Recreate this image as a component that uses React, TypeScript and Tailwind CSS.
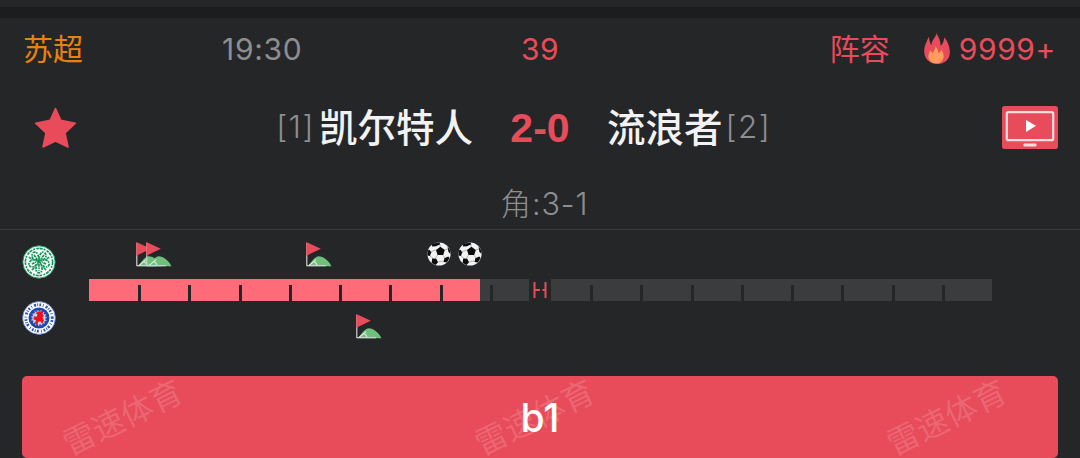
import React from 'react';

const TICKS = [0, 1, 2, 3, 4, 5, 6, 7];

const StarIcon: React.FC = () => (
  <svg className="w-[44px] h-[44px] -mt-px" viewBox="0 0 44 44">
    <path
      d="M21.5 2.5L26.8 14.4L41.3 17.2L31 27L34 41L21.5 35L9 41L12 27L1.7 17.2L16.2 14.4Z"
      fill="#e84c5b"
      stroke="#e84c5b"
      strokeWidth="1.6"
      strokeLinejoin="round"
    />
  </svg>
);

const FireIcon: React.FC = () => (
  <svg className="w-[26px] h-[31px]" viewBox="0 0 78 94">
    <path
      d="M38 0C41 12 50 18 50 39C57 34 60 25 61 13C70 24 78 40 78 58C78 80 61 94 39 94C16 94 0 78 0 54C0 38 8 26 14 11C16 20 17 30 22 37C23 21 35 14 38 0Z"
      fill="#e84c5b"
    />
    <path
      d="M35 40C38 46 43 50 43 61C48 59 51 56 53 51C57 59 60 65 59 73C57 86 48 92 37 92C24 92 13 84 13 71C13 64 17 60 18 53C22 55 24 58 26 62C29 54 34 50 35 40Z"
      fill="#ff9d5c"
    />
  </svg>
);

const LiveIcon: React.FC = () => (
  <svg className="w-[56px] h-[43px] -mt-[2px]" viewBox="0 0 56 43">
    <rect width="56" height="43" rx="2.8" fill="#e84c5b" />
    <rect x="4.8" y="6.2" width="46.4" height="28" rx="1.5" fill="none" stroke="#fbdcdf" strokeWidth="2.2" />
    <path d="M24 14L34 19.8L24 26Z" fill="#fff" />
    <rect x="21.5" y="37.5" width="13" height="3" rx="1" fill="#fbdcdf" />
  </svg>
);

const CornerIcon: React.FC<{ className?: string }> = ({ className }) => (
  <svg className={`w-[26px] h-[25px] shrink-0 ${className || ''}`} viewBox="0 0 26 25">
    <path d="M2 24.2C5 20.5 8 15 12.5 14.2C17.5 14.4 23 18.5 25.5 24.2Z" fill="#6fc07c" />
    <path d="M3 23.5L10 17.6M7.5 19.5C9.5 20 10.5 21.5 11 23" fill="none" stroke="#d9efdd" strokeWidth="1.1" />
    <path d="M0.8 1V24M0.5 23.6H20" fill="none" stroke="#d0d0d2" strokeWidth="1.2" />
    <path d="M0.3 0L14.8 6.8L0.3 13.8Z" fill="#e84c5b" />
  </svg>
);

const BallIcon: React.FC = () => (
  <svg className="w-[24px] h-[24px] shrink-0" viewBox="0 0 24 24">
    <circle cx="12" cy="12" r="11.6" fill="#f3f3f3" />
    <path
      d="M13 5V2M17.5 8L21 7M16 13.2L18 16M10.5 13L8 17M9 8L4 9.5M3 14L7 17M10.5 20L16.5 19"
      stroke="#9a9a9a"
      strokeWidth="0.7"
    />
    <g fill="#0c0c0d">
      <path d="M9 8L13.4 4.8L17.8 7.9L16.2 13H10.6Z" />
      <path d="M5.2 1.8L12.5 0.5L13.2 2.2L9 4.2L5 4.4Z" />
      <path d="M0.6 8.5L2.5 7.8L4.2 10.2L3 14L0.5 13.5Z" />
      <path d="M5.2 16.6L9.3 16.8L11 20.2L8.6 23L4.6 21Z" />
      <path d="M17.4 16.2L21.2 14.6L22.6 16L19.8 20.4L16.5 20Z" />
      <path d="M20.5 4.2L23.2 8.5L23.5 12L21.4 9.8Z" />
    </g>
  </svg>
);

const HomeCrest: React.FC = () => (
  <svg className="w-[34px] h-[34px]" viewBox="0 0 34 34">
    <circle cx="17" cy="17" r="16.2" fill="#f6fbf8" stroke="#12935a" strokeWidth="0.9" />
    <circle cx="17" cy="17" r="13.6" fill="none" stroke="#12935a" strokeWidth="1.6" strokeDasharray="3.2 1 1.8 1.4 2.6 0.7" />
    <g fill="none" stroke="#12935a" strokeWidth="1.7" strokeDasharray="2.8 0.7 1.6 1.1">
      <path d="M17 16C11 16 8 11 11.5 7.5C15 5.5 17 11 17 16C17 11 19 5.5 22.5 7.5C26 11 23 16 17 16" />
      <path d="M17 16C21 13 28 15 27 20C24 25 19 20 17 16C15 20 10 25 7 20C6 15 13 13 17 16" />
      <path d="M17 16C14 20 12 27 17 28C22 27 20 20 17 16" />
      <path d="M12 10L15 14M22 10L19 14M10 19L14 17M24 19L20 17M17 19V26M7 12L10 15M27 12L24 15M10 25L13 22M24 25L21 22" />
    </g>
  </svg>
);

const AwayCrest: React.FC = () => (
  <svg className="w-[34px] h-[34px]" viewBox="0 0 34 34">
    <circle cx="17" cy="17" r="16.4" fill="#fff" stroke="#5b7bd0" strokeWidth="0.8" />
    <circle cx="17" cy="17" r="13.2" fill="none" stroke="#2b52b4" strokeWidth="2.8" strokeDasharray="0.9 1.3 1.7 1.8 0.8 2.3 2 1.2" />
    <circle cx="17" cy="17" r="9.2" fill="#c4d2ee" stroke="#1e49ad" strokeWidth="2.6" />
    <circle cx="17" cy="17" r="7.4" fill="none" stroke="#1e49ad" strokeWidth="1.6" strokeDasharray="2 1.1" />
    <path
      d="M18 10.5L21.5 10L20.5 13L21.8 15L20.5 16.5L22 19.5L20 22.8L18.5 20.5L16.5 20.5L15 24L12.8 22.5L14 19L11.5 18.5L12 15L14.5 16L15.5 13.5L13.5 12L16 10.8Z"
      fill="#f0101c"
    />
  </svg>
);

// one half of the match clock, a tick closes every five minutes
const Segment: React.FC<{ first: string; className: string }> = ({ first, className }) => (
  <div className={`flex items-end h-[22px] overflow-hidden ${className}`}>
    {TICKS.map(i => (
      <div key={i} className={`flex justify-end shrink-0 h-4 ${i === 0 ? first : 'w-[50.25px]'}`}>
        <div className="w-[3px] h-4 bg-[#252628]" />
      </div>
    ))}
  </div>
);

const Watermark: React.FC<{ className: string }> = ({ className }) => (
  <span className={`absolute top-[22px] -rotate-[26deg] text-[32px] leading-[40px] font-normal text-[#f4b8b8]/25 whitespace-nowrap ${className}`}>
    雷速体育
  </span>
);

export default function App() {
  return (
    <div className="w-[1080px] h-[458px] overflow-hidden bg-[#252628] font-['Inter','Noto_Sans_CJK_SC',sans-serif] text-[#8d8e90]">
      <div className="h-[7px]" />
      <div className="h-[11px] bg-[#1c1d1f]" />

      <div className="flex items-center h-[64px] pb-[2px] pl-[23px] pr-[24px] text-[30px] leading-[40px]">
        <div className="w-[199px] text-[#e8820e]">苏超</div>
        <div className="w-[240px] tracking-[0.7px]">19:30</div>
        <div className="w-[156px] text-center text-[#e84c5b] tracking-[0.4px]">39</div>
        <div className="ml-auto flex items-center text-[#e84c5b]">
          <span>阵容</span>
          <span className="ml-[34px] mr-[9px] -mt-[2px]"><FireIcon /></span>
          <span className="tracking-[0.6px]">9999+</span>
        </div>
      </div>

      <div className="flex items-center h-[92px] pl-[34px] pr-[22px]">
        <div className="w-[44px]"><StarIcon /></div>
        <div className="flex items-center justify-end w-[395px] leading-[48px]">
          <span className="-mt-[2px] text-[31.5px] font-light tracking-[1.5px]">[1]</span>
          <span className="ml-[4px] text-[38.5px] font-medium text-[#f2f2f2]">凯尔特人</span>
        </div>
        <div className="w-[134px] -mt-px text-center font-['Liberation_Sans',sans-serif] text-[41px] leading-[48px] font-bold text-[#e84c5b]">2-0</div>
        <div className="flex items-center leading-[48px]">
          <span className="text-[38.5px] font-medium text-[#f2f2f2]">流浪者</span>
          <span className="ml-[3px] -mt-[2px] text-[31.5px] font-light tracking-[1.5px]">[2]</span>
        </div>
        <div className="ml-auto"><LiveIcon /></div>
      </div>

      <div className="flex items-center justify-center h-[56px] pt-[5px] pl-[9px] border-b border-[#3b3c3e] text-[30.5px] leading-[40px] font-light tracking-[0.9px]">
        角:3-1
      </div>

      <div className="flex h-[146px] pl-[22px]">
        <div className="flex flex-col gap-[22px] w-[67px] pt-[15px]">
          <HomeCrest />
          <AwayCrest />
        </div>
        <div className="w-[903px]">
          <div className="flex h-[49px] pt-[12px] pl-[47px]">
            <CornerIcon />
            <CornerIcon className="-ml-[16px]" />
            <CornerIcon className="ml-[134px]" />
            <div className="flex gap-[7px] ml-[95px]">
              <BallIcon />
              <BallIcon />
            </div>
          </div>
          <div className="flex">
            <Segment first="w-[52px]" className="w-[440px] bg-linear-to-r from-[#ff6b79] from-[391px] to-[#3b3c3e] to-[391px]" />
            <div className="w-[22px] h-[22px] flex items-center justify-center">
              <svg className="w-[14px] h-[16px]" viewBox="0 0 14 16">
                <path d="M1.5 0V16M12.5 0V16M1.5 8H7M9.5 8H12.5" fill="none" stroke="#e84c5b" strokeWidth="2" />
              </svg>
            </div>
            <Segment first="w-[42px]" className="w-[441px] bg-[#3b3c3e]" />
          </div>
          <div className="pt-[13px] pl-[267px]">
            <CornerIcon />
          </div>
        </div>
      </div>

      <div className="relative flex items-center justify-center h-[82px] pt-[2px] mx-[22px] rounded-[5px] overflow-hidden bg-[#e84c5b] text-[39px] font-medium text-white">
        <Watermark className="left-[37px]" />
        <Watermark className="left-[449px]" />
        <Watermark className="left-[861px]" />
        <span className="relative">b1</span>
      </div>
    </div>
  );
}
